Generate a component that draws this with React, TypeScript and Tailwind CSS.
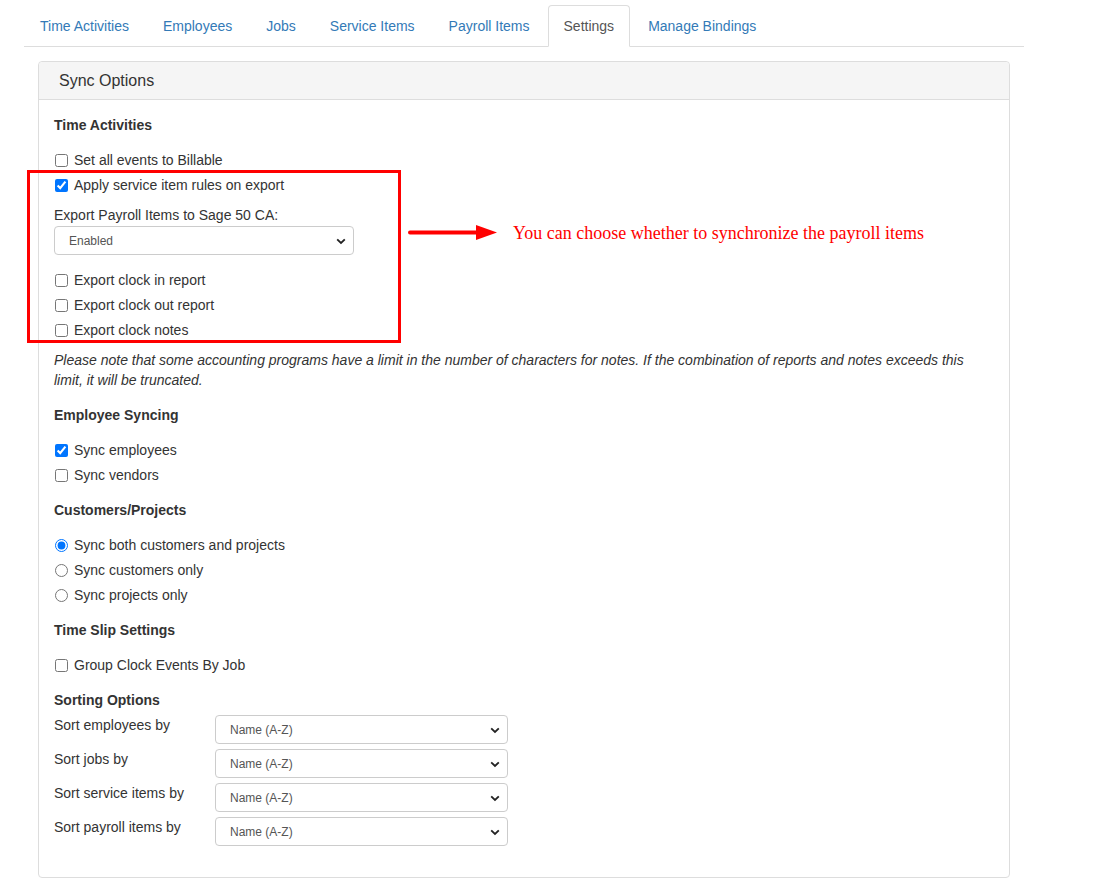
import React from "react";

const tabs = ["Time Activities", "Employees", "Jobs", "Service Items", "Payroll Items", "Settings", "Manage Bindings"];

function Chevron() {
  return (
    <svg width="10" height="7" viewBox="0 0 10 7" className="absolute right-[7px] top-[11px]">
      <path d="M1.2 1.3 L5 5 L8.8 1.3" fill="none" stroke="#222" strokeWidth="1.8" />
    </svg>
  );
}

function FakeSelect({ value, className }: { value: string; className: string }) {
  return (
    <div className={`relative h-[29px] rounded-[4px] border border-[#ccc] bg-white ${className}`}>
      <div className="pl-[14px] text-[12px] leading-[28px] text-[#555]">{value}</div>
      <Chevron />
    </div>
  );
}

function Check({ label, checked = false, radio = false }: { label: string; checked?: boolean; radio?: boolean }) {
  return (
    <label className="flex h-[25px] items-center">
      <input
        type={radio ? "radio" : "checkbox"}
        name={radio ? "cust" : undefined}
        defaultChecked={checked}
        className="ml-[1px] mr-[6px] h-[13px] w-[13px]"
      />
      <span>{label}</span>
    </label>
  );
}

function Heading({ children, className = "" }: { children: React.ReactNode; className?: string }) {
  return <h5 className={`text-[14px] font-bold leading-[20px] ${className}`}>{children}</h5>;
}

export default function App() {
  const sorts = ["Sort employees by", "Sort jobs by", "Sort service items by", "Sort payroll items by"];

  return (
    <div
      className="relative min-h-[889px] w-[1099px] bg-white pl-[24px] pt-[5px] text-[14px] text-[#333]"
      style={{ fontFamily: '"Liberation Sans", Arial, sans-serif' }}
    >
      <ul className="flex w-[1000px] border-b border-[#ddd]">
        {tabs.map((t) => {
          const active = t === "Settings";
          return (
            <li key={t} className="-mb-px mr-[2px]">
              <span
                className={
                  active
                    ? "block rounded-t-[4px] border border-[#ddd] border-b-white bg-white px-[15px] py-[10px] leading-[20px] text-[#555]"
                    : "block border border-transparent px-[15px] py-[10px] leading-[20px] text-[#337ab7]"
                }
              >
                {t}
              </span>
            </li>
          );
        })}
      </ul>

      <div className="ml-[14px] mt-[14px] w-[972px] rounded-[4px] border border-[#ddd]">
        <div className="rounded-t-[4px] border-b border-[#ddd] bg-[#f5f5f5] px-[20px] py-[10px] text-[16px] leading-[17px] text-[#333]">
          Sync Options
        </div>

        <div className="px-[15px] pb-[31px] pt-[15px]">
          <Heading className="mb-[13px]">Time Activities</Heading>
          <Check label="Set all events to Billable" />
          <Check label="Apply service item rules on export" checked />
          <div className="mt-[7px] leading-[20px]">Export Payroll Items to Sage 50 CA:</div>
          <FakeSelect value="Enabled" className="mt-[1px] w-[300px]" />
          <div className="mt-[13px]">
            <Check label="Export clock in report" />
            <Check label="Export clock out report" />
            <Check label="Export clock notes" />
          </div>
          <p className="mt-[7px] italic leading-[20px]">
            Please note that some accounting programs have a limit in the number of characters for notes. If the combination of reports and notes exceeds this limit, it will be truncated.
          </p>

          <Heading className="mb-[13px] mt-[15px]">Employee Syncing</Heading>
          <Check label="Sync employees" checked />
          <Check label="Sync vendors" />

          <Heading className="mb-[13px] mt-[12px]">Customers/Projects</Heading>
          <Check label="Sync both customers and projects" radio checked />
          <Check label="Sync customers only" radio />
          <Check label="Sync projects only" radio />

          <Heading className="mb-[13px] mt-[12px]">Time Slip Settings</Heading>
          <Check label="Group Clock Events By Job" />

          <Heading className="mt-[12px]">Sorting Options</Heading>
          <div className="mt-[5px] flex flex-col gap-[5px]">
            {sorts.map((s) => (
              <div key={s} className="flex items-start">
                <div className="w-[161px] leading-[20px]">{s}</div>
                <FakeSelect value="Name (A-Z)" className="w-[293px]" />
              </div>
            ))}
          </div>
        </div>
      </div>

      {/* annotation overlay */}
      <div className="absolute left-[27px] top-[170px] h-[173px] w-[374px] border-[3px] border-[#ff0000]" />
      <div className="absolute left-[408px] top-[224px] flex items-center">
        <svg width="90" height="17" viewBox="0 0 90 17">
          <line x1="2" y1="8.5" x2="70" y2="8.5" stroke="#ff0000" strokeWidth="4" strokeLinecap="round" />
          <polygon points="68,1 89,8.5 68,16" fill="#ff0000" />
        </svg>
      </div>
      <div
        className="absolute left-[513px] top-[222px] text-[18px] leading-[22px] text-[#ff0000]"
        style={{ fontFamily: '"Liberation Serif", "Times New Roman", serif' }}
      >
        You can choose whether to synchronize the payroll items
      </div>
    </div>
  );
}
